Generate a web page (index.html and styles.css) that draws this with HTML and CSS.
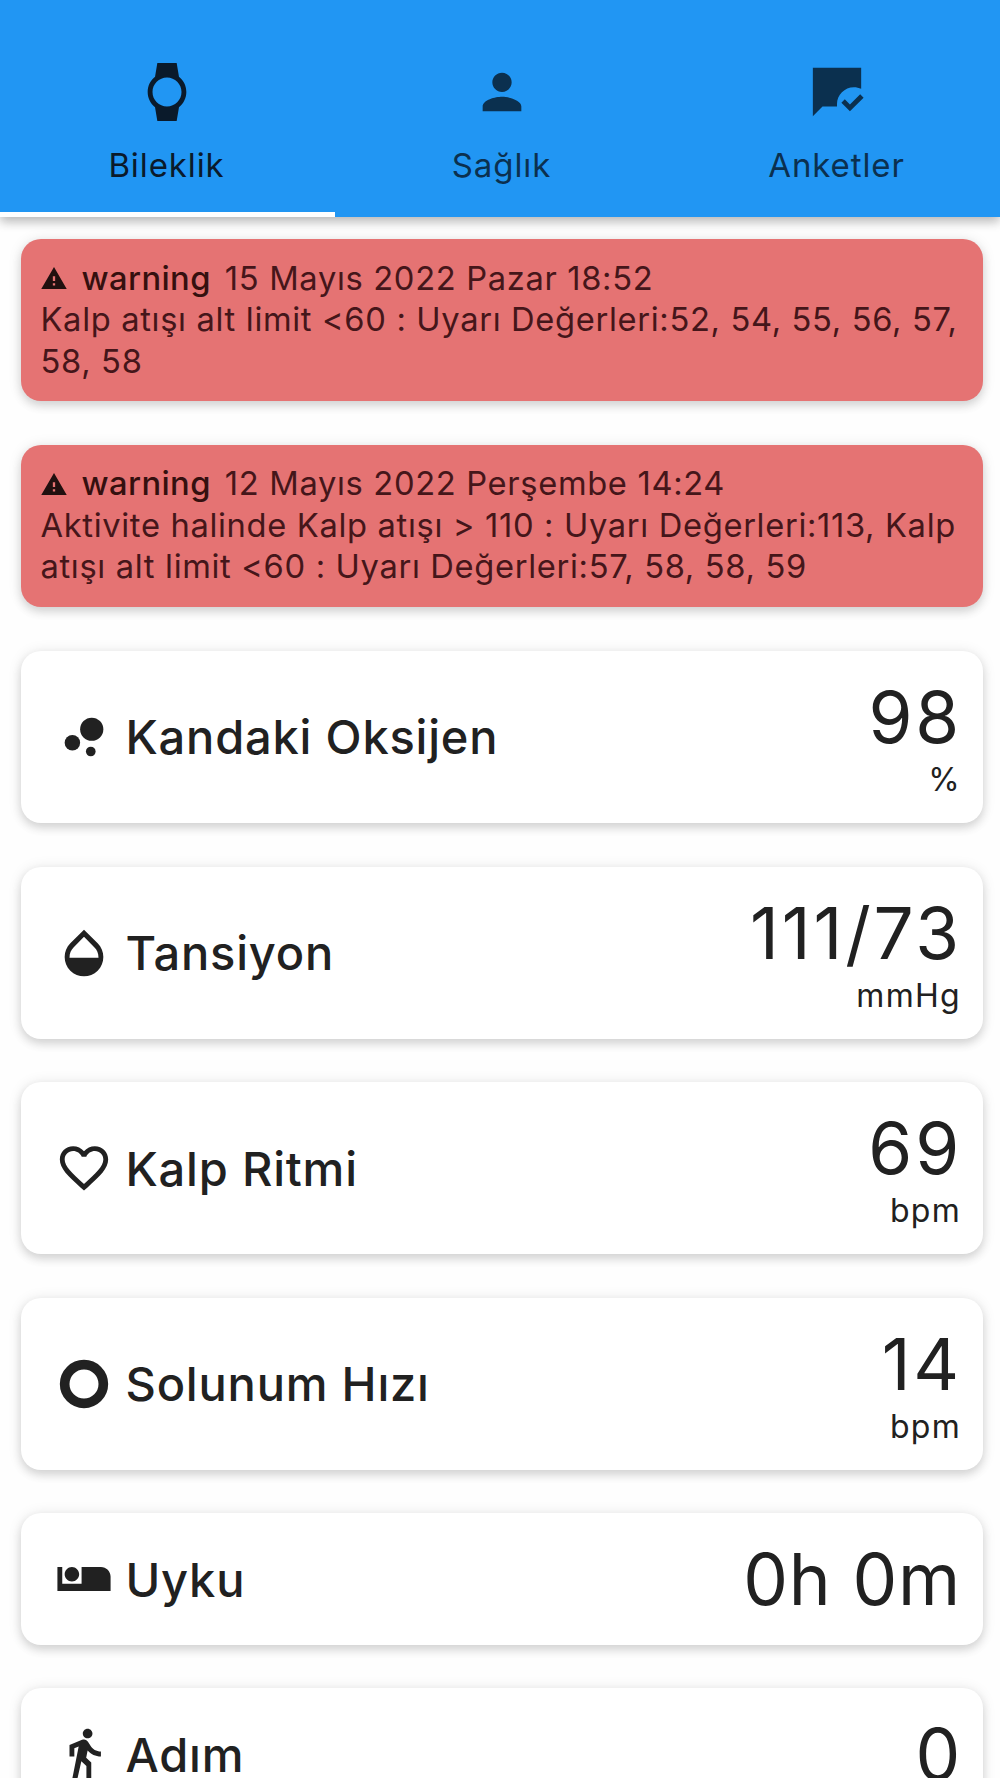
FILE: index.html
```
<!DOCTYPE html>
<html lang="tr">
<head>
  <meta charset="UTF-8">
  <meta name="viewport" content="width=device-width, initial-scale=1.0">
  <title>Bileklik</title>
  <link rel="stylesheet" href="styles.css">
</head>
<body>
  <nav class="tabs">
    <div class="tab active">
      <svg class="icon" viewBox="0 0 24 24"><path d="M20 12c0-2.54-1.19-4.81-3.04-6.27L16 0H8l-.95 5.73C5.19 7.19 4 9.45 4 12s1.19 4.81 3.05 6.27L8 24h8l.96-5.73C18.81 16.81 20 14.54 20 12zM6 12c0-3.31 2.69-6 6-6s6 2.69 6 6-2.69 6-6 6-6-2.69-6-6z"/></svg>
      <span>Bileklik</span>
    </div>
    <div class="tab">
      <svg class="icon" viewBox="0 0 24 24"><path d="M12 12c2.21 0 4-1.79 4-4s-1.79-4-4-4-4 1.79-4 4 1.79 4 4 4zm0 2c-2.67 0-8 1.34-8 4v2h16v-2c0-2.66-5.33-4-8-4z"/></svg>
      <span>Sağlık</span>
    </div>
    <div class="tab">
      <svg class="icon" viewBox="0 0 24 24"><path d="M12 17c0-3.87 3.13-7 7-7 1.08 0 2.09.25 3 .68V2H2.01v20L6 18h6v-1zm11-2.66l-1.41-1.41-4.24 4.24-2.12-2.12-1.41 1.41 3.53 3.54 5.65-5.66z"/></svg>
      <span>Anketler</span>
    </div>
  </nav>

  <main class="list">
    <div class="card alert">
      <div class="alert-head">
        <svg class="alert-icon" viewBox="1 2 22 19"><path d="M1 21h22L12 2 1 21zm12-3h-2v-2h2v2zm0-4h-2v-4h2v4z"/></svg>
        <b>warning</b>
        <span>15 Mayıs 2022 Pazar 18:52</span>
      </div>
      <div class="alert-text">Kalp atışı alt limit &lt;60 : Uyarı Değerleri:52, 54, 55, 56, 57, 58, 58</div>
    </div>

    <div class="card alert">
      <div class="alert-head">
        <svg class="alert-icon" viewBox="1 2 22 19"><path d="M1 21h22L12 2 1 21zm12-3h-2v-2h2v2zm0-4h-2v-4h2v4z"/></svg>
        <b>warning</b>
        <span>12 Mayıs 2022 Perşembe 14:24</span>
      </div>
      <div class="alert-text">Aktivite halinde Kalp atışı &gt; 110 : Uyarı Değerleri:113, Kalp atışı alt limit &lt;60 : Uyarı Değerleri:57, 58, 58, 59</div>
    </div>

    <div class="card metric">
      <svg class="icon" viewBox="0 0 24 24"><circle cx="7.2" cy="14.4" r="3.2"/><circle cx="14.8" cy="18" r="2"/><circle cx="15.2" cy="8.8" r="4.8"/></svg>
      <div class="name">Kandaki Oksijen</div>
      <div class="reading">
        <div class="value">98</div>
        <div class="unit">%</div>
      </div>
    </div>

    <div class="card metric">
      <svg class="icon" viewBox="0 0 24 24"><path d="M17.66 8L12 2.35 6.34 8C4.78 9.56 4 11.64 4 13.64s.78 4.11 2.34 5.67 3.61 2.35 5.66 2.35 4.1-.79 5.66-2.35S20 15.64 20 13.64 19.22 9.56 17.66 8zM6 14c.01-2 .62-3.27 1.76-4.4L12 5.27l4.24 4.38C17.38 10.77 17.99 12 18 14H6z"/></svg>
      <div class="name">Tansiyon</div>
      <div class="reading">
        <div class="value">111/73</div>
        <div class="unit">mmHg</div>
      </div>
    </div>

    <div class="card metric">
      <svg class="icon" viewBox="0 0 24 24"><path d="M16.5 3c-1.74 0-3.41.81-4.5 2.09C10.91 3.81 9.24 3 7.5 3 4.42 3 2 5.42 2 8.5c0 3.78 3.4 6.86 8.55 11.54L12 21.35l1.45-1.32C18.6 15.36 22 12.28 22 8.5 22 5.42 19.58 3 16.5 3zm-4.4 15.55l-.1.1-.1-.1C7.14 14.24 4 11.39 4 8.5 4 6.5 5.5 5 7.5 5c1.54 0 3.04.99 3.57 2.36h1.87C13.46 5.99 14.96 5 16.5 5c2 0 3.5 1.5 3.5 3.5 0 2.89-3.14 5.74-7.9 10.05z"/></svg>
      <div class="name">Kalp Ritmi</div>
      <div class="reading">
        <div class="value">69</div>
        <div class="unit">bpm</div>
      </div>
    </div>

    <div class="card metric">
      <svg class="icon" viewBox="0 0 24 24"><circle class="ring" cx="12" cy="12" r="8"/></svg>
      <div class="name">Solunum Hızı</div>
      <div class="reading">
        <div class="value">14</div>
        <div class="unit">bpm</div>
      </div>
    </div>

    <div class="card metric short">
      <svg class="icon" viewBox="0 0 24 24"><path d="M7 13c1.65 0 3-1.35 3-3S8.65 7 7 7s-3 1.35-3 3 1.35 3 3 3zm12-6h-8v7H3V7H1v10h22v-6c0-2.21-1.79-4-4-4z"/></svg>
      <div class="name">Uyku</div>
      <div class="reading">
        <div class="value time">0h 0m</div>
      </div>
    </div>

    <div class="card metric short">
      <svg class="icon" viewBox="0 0 24 24"><path d="M13.5 5.5c1.1 0 2-.9 2-2s-.9-2-2-2-2 .9-2 2 .9 2 2 2zM9.8 8.9L7 23h2.1l1.8-8 2.1 2v6h2v-7.5l-2.1-2 .6-3C14.8 12 16.8 13 19 13v-2c-1.9 0-3.5-1-4.3-2.4l-1-1.6c-.4-.6-1-1-1.7-1-.3 0-.5.1-.8.1L6 8.3V13h2V9.6l1.8-.7"/></svg>
      <div class="name">Adım</div>
      <div class="reading">
        <div class="value time">0</div>
      </div>
    </div>
  </main>
</body>
</html>
```
FILE: styles.css
```
:root {
  --primary-color: #2196f3;
  --alert-color: #e57373;
  --text-color: #212121;
}

* {
  box-sizing: border-box;
}

body {
  margin: 0;
  height: 1778px;
  overflow: hidden;
  background: #fefefe;
  color: var(--text-color);
  font-family: Inter, "Liberation Sans", sans-serif;
}

.icon {
  width: 58px;
  height: 58px;
  flex: none;
  fill: currentColor;
}

/* top tab bar */
.tabs {
  display: grid;
  grid-template-columns: repeat(3, 335px);
  height: 217px;
  background: var(--primary-color);
  box-shadow: 0 5px 10px rgba(0,0,0,0.2), 0 2px 12px rgba(0,0,0,0.12);
}

.tab {
  display: flex;
  flex-direction: column;
  align-items: center;
  gap: 24px;
  padding: 63px 2px 0 0;
  border-bottom: 5px solid transparent;
  color: #0b304f;
  font-size: 33px;
  line-height: 40px;
  letter-spacing: 0.9px;
}

.tab.active {
  border-bottom-color: #fff;
  color: #0a1a2b;
}

/* cards */
.list {
  display: flex;
  flex-direction: column;
  gap: 43.6px;
  padding: 22px 17px 0 20.5px;
}

.card {
  flex: none;
  border-radius: 20px;
  background: #fff;
  box-shadow: 0 5px 10px rgba(0,0,0,0.12), 0 1px 14px rgba(0,0,0,0.1);
}

.alert {
  height: 162.4px;
  padding: 18.5px 10px 0 20px;
  background: var(--alert-color);
  color: #45161a;
  font-size: 32.7px;
  line-height: 41.5px;
  letter-spacing: 0.66px;
}

.alert-head {
  display: flex;
  align-items: center;
}

.alert-head b {
  margin: 0 14px 0 15px;
  font-weight: 500;
  letter-spacing: 0.4px;
  color: #35100f;
}

.alert-icon {
  width: 26px;
  height: 22px;
  fill: #21100f;
}

.metric {
  display: flex;
  align-items: center;
  height: 172px;
  padding: 0 23px 0 34px;
}

.metric.short {
  height: 131.5px;
}

.name {
  margin-left: 13px;
  font-size: 47px;
  font-weight: 500;
  letter-spacing: 0.8px;
}

.reading {
  margin-left: auto;
  text-align: right;
}

/* negative margins cancel the spacing after the last letter */
.value {
  margin-right: -2px;
  font-size: 71px;
  line-height: 84px;
  letter-spacing: 2.8px;
}

.value.time {
  margin-right: -1px;
  letter-spacing: 0.8px;
}

.unit {
  margin: 2px -1px 0 0;
  font-size: 32px;
  line-height: 38px;
  letter-spacing: 1.3px;
}

.ring {
  fill: none;
  stroke: currentColor;
  stroke-width: 4;
}
```
